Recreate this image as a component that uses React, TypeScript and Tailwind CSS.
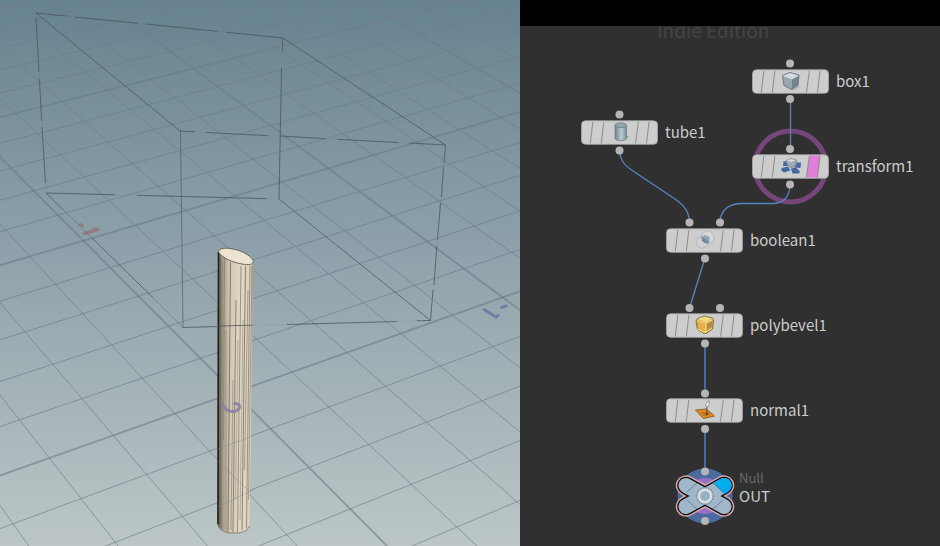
import type { ReactNode } from "react";

/* ---------- perspective ground grid ---------- */

function project(u: number, v: number): [number, number] {
  const w = 0.0881 * u + 0.1583 * v + 1;
  return [(312.7 * u - 137.8 * v + 234.3) / w, (-68.9 * u - 113.7 * v + 392.4) / w];
}

function Grid() {
  const lines: ReactNode[] = [];
  const add = (key: string, a: [number, number], b: [number, number], major: boolean) =>
    lines.push(
      <line key={key} x1={a[0]} y1={a[1]} x2={b[0]} y2={b[1]} strokeWidth={major ? 1.9 : 1} strokeOpacity={major ? 0.6 : 0.65} />,
    );
  for (let i = -15; i <= 25; i++) {
    add("u" + i, project(i / 5, -3), project(i / 5, 5), i % 5 === 0);
  }
  for (let j = -15; j <= 25; j++) {
    add("v" + j, project(-3, j / 5), project(5, j / 5), j % 5 === 0);
  }
  return <g stroke="url(#gridFade)">{lines}</g>;
}

/* ---------- bounding box of the cutter ---------- */

const darkEdges = [
  "M36 13L66 16M75 17L138 23.3M146 24L217 31.3M226 32.2L283 38",
  "M36 13L180 131",
  "M283 38L445.5 145",
  "M180 131L195 131.8M206 132.4L268 135.7M280 136L325 138.6M337 139.3L398 142.5M409 143L445.5 145",
  "M36 18L39 72M39.3 79L41.7 121M42 127L45.5 183",
  "M282.5 38V51M281.5 68L279 199",
  "M46 193L115 194.8M137 195.3L266 198.6",
  "M46 193L63 209.6M92 238L153 297.7",
  "M279 199L430.5 320.5",
  "M183 327.5L217 326.5M287 324.5L397 321.5M417 320.7L430.5 320.5",
  "M445.5 145L444 163M443.5 167L441.5 197M440.5 203L437.5 240M436.8 246L434 285M433 290L430.5 320.5",
];

function BoundingBox() {
  return (
    <g fill="none" stroke="#46535a">
      <g strokeWidth="1" strokeOpacity="0.7">
        {darkEdges.map((d) => (
          <path key={d} d={d} />
        ))}
      </g>
      <path d="M36 13L283 38M180 131L445.5 145M36 13L46 193M282.5 38L279 199M46 193L279 199M183 327.5L430.5 320.5M445.5 145L430.5 320.5" strokeOpacity="0.08" />
      <path d="M63 209.6L92 238M153 297.7L183 327.5" strokeOpacity="0.4" />
      <path d="M180.5 131L183 327.5" strokeOpacity="0.6" />
    </g>
  );
}

/* ---------- tube geometry ---------- */

const ridges: { x: number; foot: number; from: number; to: number; dark: number }[] = [
  { x: 220.5, foot: 220, from: 258, to: 526, dark: 0.7 },
  { x: 222.5, foot: 221.5, from: 262, to: 528, dark: 0.35 },
  { x: 224.5, foot: 223.5, from: 258, to: 440, dark: 0.4 },
  { x: 226, foot: 226, from: 330, to: 530, dark: 0.3 },
  { x: 230.5, foot: 228, from: 262, to: 532, dark: 0.75 },
  { x: 233, foot: 231, from: 380, to: 530, dark: 0.45 },
  { x: 236, foot: 233, from: 300, to: 532, dark: 0.7 },
  { x: 238, foot: 235.5, from: 340, to: 500, dark: 0.35 },
  { x: 241, foot: 237.5, from: 266, to: 532, dark: 0.6 },
  { x: 243, foot: 240, from: 320, to: 520, dark: 0.4 },
  { x: 245.5, foot: 242, from: 266, to: 530, dark: 0.75 },
  { x: 248, foot: 244.5, from: 290, to: 470, dark: 0.5 },
  { x: 250, foot: 246.5, from: 266, to: 528, dark: 0.6 },
  { x: 252, foot: 248.5, from: 266, to: 500, dark: 0.5 },
];

function Tube() {
  return (
    <g>
      <path d="M218 252L217.5 525C219 529 223 532.5 230 533H238C244 532 248 530 249.5 526L253.5 262Z" fill="url(#tubeSide)" />
      <g stroke="#5c564b" strokeWidth="0.9">
        {ridges.map((r) => (
          <line key={r.x} x1={r.x} y1={r.from} x2={r.foot} y2={r.to} strokeOpacity={r.dark} />
        ))}
      </g>
      <path d="M218.5 252L218 524" stroke="#20201e" strokeWidth="1.6" />
      <path d="M217.5 524C219 529 223 532.5 230 533H238C244 532 248 530 249.5 526" fill="none" stroke="#857d6e" />
      <path d="M218.5 252C219 248.5 224 247.5 231 248.7C241 250 250 255 253.3 260.5C254 264.5 249 265.5 242 264C232 262.5 221 257 218.5 252Z" fill="#ece3d2" stroke="#5f5a4f" strokeWidth="0.9" />
      <path d="M218 326L253 325.2" stroke="#555" strokeOpacity="0.8" />
      <g stroke="#7e8992" strokeOpacity="0.55">
        <path d="M218 449L253 436M218 507L253 490M218 461L250 492" strokeDasharray="4 1" />
      </g>
      <path d="M222 402C223 407 226 410.5 231 411.5C237 412 240 409 239.5 406C239 403.5 236 403.5 233.5 404" fill="none" stroke="#8580a5" strokeWidth="3" strokeOpacity="0.85" />
    </g>
  );
}

function Viewport() {
  return (
    <svg className="block h-full w-full" viewBox="0 0 520 546" preserveAspectRatio="xMinYMin slice" role="img" aria-label="3D viewport">
      <defs>
        <linearGradient id="sky" x1="0" y1="0" x2="0" y2="1">
          <stop offset="0" stopColor="#678390" />
          <stop offset="0.5" stopColor="#92a4ac" />
          <stop offset="1" stopColor="#bcc6c6" />
        </linearGradient>
        <linearGradient id="gridFade" gradientUnits="userSpaceOnUse" x1="0" y1="0" x2="0" y2="546">
          <stop offset="0" stopColor="#717b89" />
          <stop offset="0.35" stopColor="#6a7a86" />
          <stop offset="1" stopColor="#6e7d88" />
        </linearGradient>
        <linearGradient id="tubeSide" x1="0" y1="0" x2="1" y2="0">
          <stop offset="0" stopColor="#5d584e" />
          <stop offset="0.12" stopColor="#9d9483" />
          <stop offset="0.32" stopColor="#cfc5b2" />
          <stop offset="0.65" stopColor="#e2d8c5" />
          <stop offset="0.92" stopColor="#ddd1bb" />
          <stop offset="1" stopColor="#a89b87" />
        </linearGradient>
      </defs>
      <rect width="520" height="546" fill="url(#sky)" />
      <Grid />
      <g fill="none" strokeWidth="3" strokeLinecap="round">
        <path d="M80.5 224.5L82.5 225.5M84 233.5L98 229.5M94 229L97 229.5" stroke="#95797f" />
        <path d="M484 309.5L496 317L498 315.5M501.5 307.5L506 306" stroke="#777ca3" />
      </g>
      <BoundingBox />
      <Tube />
    </svg>
  );
}

/* ---------- node icons, each on a 20 by 20 grid ---------- */

const boxIcon = (
  <>
    <path d="M9 18L17 13.5L19 16L12 19.5Z" fill="#999" opacity="0.5" />
    <path d="M1.5 4.5L9 1.5L18 4L11 8Z" fill="#d3dce1" />
    <path d="M1.5 4.5L11 8L10.5 18.5L3 14.5Z" fill="#99a7b0" />
    <path d="M11 8L18 4L17 14L10.5 18.5Z" fill="#76848c" />
    <path d="M1.5 4.5L9 1.5L18 4L17 14L10.5 18.5L3 14.5Z" fill="none" stroke="#66737b" strokeWidth="0.9" />
    <path d="M2.5 5.2L11 8L17.3 4.8" fill="none" stroke="#c8d1d6" strokeWidth="0.9" />
  </>
);

const tubeIcon = (
  <>
    <path d="M8 19L16 18L19 14.5L16 13Z" fill="#777" opacity="0.5" />
    <path d="M5 3V16.5C6.5 19.5 14.5 19.5 16.5 16.5V3Z" fill="url(#tubeIconSide)" />
    <ellipse cx="10.7" cy="3.3" rx="5.7" ry="2.4" fill="#91a6af" stroke="#627982" strokeWidth="0.8" />
    <path d="M5 3V16.5C6.5 19.5 14.5 19.5 16.5 16.5V3" fill="none" stroke="#6e848d" strokeWidth="0.8" />
  </>
);

const transformIcon = (
  <>
    <g fill="#42699f">
      <path d="M2.5 5.5L8 4.5L7.5 10L2 10Z" />
      <path d="M0.5 12L7 10.5L9.5 14.5L3 16.5L0.5 14.5Z" />
      <path d="M10 12.5L15 11.5L19 15.5L18 17.5L11.5 17.5Z" />
      <path d="M13 6.5L20 6.5L19.500 12L13.500 11.500Z" />
    </g>
    <path d="M5 5L10 2.5L15.5 4L15 9.5L10 12L6.5 9Z" fill="#9eaab3" stroke="#747e85" strokeWidth="0.7" />
    <path d="M5.5 5L10 3L15 4.200L10.300 6Z" fill="#d5dce0" />
  </>
);

const booleanIcon = (
  <>
    <circle cx="12.5" cy="7.5" r="6.5" fill="#d6d8d9" stroke="#afb4b7" strokeWidth="0.8" />
    <path d="M1 9L7 6.5L13 9.5L12.5 15.5L7 18.5L1.5 15Z" fill="#d2d4d5" fillOpacity="0.7" stroke="#afb4b7" strokeWidth="0.8" />
    <path d="M6.5 6.500L14 10.500V13L10.500 13.500L7 11Z" fill="#76879a" />
    <path d="M6.5 6.500L10 5L14.500 7V12.500L10.500 9Z" fill="#94a3b1" />
  </>
);

const bevelIcon = (
  <>
    <path d="M2.5 3.5L9 1L17.5 3L18.5 5L17.5 14L11 18.5L9 18.5L2.5 14.5L1 6Z" fill="#d8a848" stroke="#75643a" strokeWidth="0.9" />
    <path d="M2.5 4L9 1.5L17 3.5L11 7Z" fill="#efdc97" />
    <path d="M12 8.5L17.5 5L16.5 13L12 17Z" fill="#b88d42" />
    <path d="M3 7.5L9.5 9.5L9 16L4 13.5Z" fill="#e8ad50" />
    <path d="M2 5.5L10.5 8L17.8 4.5M10.7 8L10.2 18M6 3L13.5 5M2.500 14L10 17.500L17 13" fill="none" stroke="#f5dc70" strokeWidth="1.2" />
  </>
);

const normalIcon = (
  <>
    <path d="M0.5 10L11.5 9L19.5 16L8.5 18.5Z" fill="#e48b26" stroke="#7d5a2c" strokeWidth="0.9" />
    <path d="M5 12L13.5 11.5L16 14.5L8.5 16Z" fill="#c67519" />
    <path d="M11.5 13.5L12 6.5" stroke="#59636b" strokeWidth="1.1" />
    <path d="M10.5 6L12 2L14.5 1L14 4.5L12.5 7Z" fill="#f5f5f5" stroke="#777" strokeWidth="0.7" />
    <circle cx="11.8" cy="14" r="1.2" fill="#4f3a22" />
  </>
);

/* ---------- network nodes ---------- */

type NodeSpec = { name: string; place: string; icon: ReactNode; flagged?: boolean };

const nodes: NodeSpec[] = [
  { name: "box1", place: "left-[232px] top-[43px]", icon: boxIcon },
  { name: "tube1", place: "left-[61px] top-[94px]", icon: tubeIcon },
  { name: "transform1", place: "left-[232px] top-[128px]", icon: transformIcon, flagged: true },
  { name: "boolean1", place: "left-[146px] top-[202px]", icon: booleanIcon },
  { name: "polybevel1", place: "left-[146px] top-[287px]", icon: bevelIcon },
  { name: "normal1", place: "left-[146px] top-[372px]", icon: normalIcon },
];

function NetworkNode({ name, place, icon, flagged }: NodeSpec) {
  return (
    <button type="button" className={"absolute flex h-6 items-center gap-[7px] whitespace-nowrap " + place}>
      <svg className="overflow-visible" width="77" height="25" viewBox="0 0 77 25" aria-hidden="true">
        <rect x="0.5" y="0.8" width="76" height="23.5" rx="4" fill="#cdcdcd" stroke="#a8a8a8" strokeWidth="0.8" />
        {flagged && <path d="M57.5 1.5H68L65.5 23.5H54.5Z" fill="#df7fd9" />}
        <path d="M11.8 2L9.3 23.5M22.8 2L20.3 23.5M57.3 2L54.5 23.5M68 2L65.5 23.5" stroke="#8c8c8c" strokeWidth="1" />
        <svg x="29" y="2" width="20" height="20" viewBox="0 0 20 20">
          {icon}
        </svg>
      </svg>
      <span className="text-[15px] leading-6 text-[#cccccc]">{name}</span>
    </button>
  );
}

const connectors = [
  [270, 37.5], [270, 73], [99.5, 88.5], [99.5, 124.5], [270, 123], [270, 158.5],
  [169.5, 196.5], [200, 196.5], [185, 232.5], [169.5, 282], [200, 282], [185, 317.5],
  [185, 367.5], [185, 403],
];

function Wires() {
  return (
    <svg className="absolute left-0 top-0" width="420" height="520" viewBox="0 0 420 520" aria-hidden="true">
      <defs>
        <linearGradient id="tubeIconSide">
          <stop offset="0" stopColor="#67808b" />
          <stop offset="0.55" stopColor="#bccbd0" />
          <stop offset="1" stopColor="#768d97" />
        </linearGradient>
      </defs>
      <circle cx="270.5" cy="140.5" r="35.5" fill="none" stroke="#76457a" strokeWidth="5" />
      <g fill="none" stroke="#5484c2" strokeWidth="1.3">
        <path d="M270.5 73V123" />
        <path d="M270 158C270 170 264 177.5 253 177.5H222C209 177.5 200.5 184 200 196" />
        <path d="M99.5 124C100 134 104 139 113 145L155 173C165 180 169 186 169.5 196" />
        <path d="M185 232L169.5 282" />
        <path d="M185 317V367M185 403V445" stroke="#4b6fa5" strokeWidth="1.8" />
      </g>
      <g fill="#b5b5b5">
        {connectors.map(([x, y]) => (
          <circle key={x + "-" + y} cx={x} cy={y} r="4" />
        ))}
      </g>
    </svg>
  );
}

function OutNode() {
  return (
    <button type="button" className="absolute left-[155px] top-[440px] flex items-center gap-1 text-left">
      <svg width="60" height="60" viewBox="-30 -30 60 60" aria-hidden="true">
        <defs>
          <clipPath id="displayFlag">
            <path d="M7 -14L21 0H30V-30H7Z" />
          </clipPath>
        </defs>
        <circle r="27.5" fill="#4a6aa0" />
        <circle r="18" fill="#9470c8" />
        <g strokeLinecap="round" fill="none">
          <path d="M-19 -10.5L19 10.5M-19 10.5L19 -10.5" stroke="#dda6a6" strokeWidth="20.5" />
          <path d="M-19 -10.5L19 10.5M-19 10.5L19 -10.5" stroke="#0b0b10" strokeWidth="17.5" />
          <path d="M-19 -10.5L19 10.5M-19 10.5L19 -10.5" stroke="#a0b6c9" strokeWidth="15" />
          <path d="M0 0L19 -10.5" stroke="#00aeef" strokeWidth="15" clipPath="url(#displayFlag)" />
        </g>
        <path d="M-8 -13L-18 -4M-18 4L-8 13M8 13L18 4M8 -13L18 -4" stroke="#65788a" strokeWidth="0.9" />
        <circle r="8.2" fill="#c9d3da" />
        <circle r="8.2" fill="none" stroke="#68757f" strokeWidth="1.2" strokeDasharray="1.4 1.2" />
        <circle r="6.8" fill="#dde2e5" />
        <circle r="5" fill="#97b0c5" />
        <circle cy="-24.5" r="4" fill="#b5b5b5" />
        <circle cy="25" r="4" fill="#b5b5b5" />
      </svg>
      <span className="flex flex-col pb-4">
        <span className="text-[13px] leading-4 text-[#6b6b6b]">Null</span>
        <span className="text-[15px] leading-5 text-[#cccccc]">OUT</span>
      </span>
    </button>
  );
}

export default function App() {
  return (
    <main className="flex h-screen overflow-hidden bg-[#303030] font-['Noto_Sans_CJK_SC',sans-serif]">
      <section className="min-w-0 flex-[26]">
        <Viewport />
      </section>
      <section className="flex min-w-0 flex-[21] flex-col">
        <header className="h-[26px] shrink-0 bg-black" />
        <div className="relative flex-1 overflow-hidden bg-[#303030]">
          <p className="absolute left-[137px] top-[-8px] whitespace-nowrap text-[19px] leading-6 text-[#444444]">Indie Edition</p>
          <Wires />
          {nodes.map((n) => (
            <NetworkNode key={n.name} {...n} />
          ))}
          <OutNode />
        </div>
      </section>
    </main>
  );
}
